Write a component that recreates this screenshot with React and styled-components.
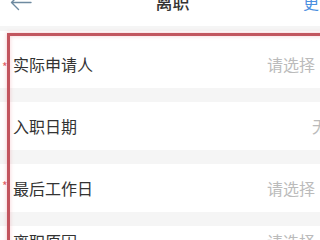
import React from "react";
import styled, { createGlobalStyle } from "styled-components";

const Global = createGlobalStyle`
  html, body { margin: 0; padding: 0; background: #f5f5f5; overflow: hidden; }
  body { font-family: "Noto Sans CJK SC", "Noto Sans", sans-serif; }
`;

const Page = styled.div`
  width: 345px;
  position: relative;
  background: #f5f5f5;
`;

const Header = styled.div`
  box-sizing: content-box;
  height: 20px;
  margin-top: -8px;
  padding: 0 10px 14px 10px;
  background: #fff;
  display: flex;
  align-items: center;
  justify-content: space-between;
  position: relative;
`;

const Back = styled.div`
  width: 22px;
  height: 20px;
  display: flex;
  align-items: center;
`;

const Title = styled.div`
  position: absolute;
  left: 0;
  right: 0;
  top: 0;
  height: 20px;
  line-height: 20px;
  text-align: center;
  font-size: 17px;
  font-weight: 500;
  color: #333;
  pointer-events: none;
`;

const More = styled.div`
  font-size: 16px;
  line-height: 20px;
  color: #4a8fe0;
`;

const Gap = styled.div`
  height: 5px;
`;

const Form = styled.div`
  position: relative;
  display: flex;
  flex-direction: column;
  gap: 14px;
`;

const Row = styled.div`
  position: relative;
  background: #fff;
  box-sizing: border-box;
  height: ${(p) => p.$h}px;
  padding: ${(p) => p.$pt}px 30px 0 13px;
  display: flex;
  align-items: ${(p) => (p.$top ? "flex-start" : "center")};
  justify-content: space-between;
`;

const Star = styled.span`
  position: absolute;
  left: 2px;
  font-size: 12px;
  color: #e05a62;
  line-height: 1;
`;

const Label = styled.span`
  font-size: 16px;
  line-height: 22px;
  color: #333;
`;

const Value = styled.span`
  font-size: 16px;
  line-height: 22px;
  color: #bbb;
  margin-right: ${(p) => p.$mr || 0}px;
`;

const Highlight = styled.div`
  position: absolute;
  top: 2px;
  left: 7px;
  width: 400px;
  height: 400px;
  border: 3px solid #c2555e;
  box-shadow: 0 0 4px rgba(230, 120, 130, 0.45),
    inset 0 0 4px rgba(230, 120, 130, 0.35);
  pointer-events: none;
`;

const rows = [
  { label: "实际申请人", value: "请选择", star: true, h: 57, pt: 9 },
  { label: "入职日期", value: "无", h: 48, pt: 0, mr: -13 },
  { label: "最后工作日", value: "请选择", star: true, h: 48, pt: 0 },
  { label: "离职原因", value: "请选择", h: 60, pt: 4, top: true },
];

export default function App() {
  return (
    <>
      <Global />
      <Page>
        <Header>
          <Back>
            <svg width="22" height="20" viewBox="0 0 22 20">
              <path
                d="M21 10.5H1.5M1.5 10.5L8.5 3.5M1.5 10.5L8.5 17.5"
                fill="none"
                stroke="#6e8aa0"
                strokeWidth="1.4"
                strokeLinecap="round"
              />
            </svg>
          </Back>
          <Title>离职</Title>
          <More>更多</More>
        </Header>
        <Gap />
        <Form>
          {rows.map((r) => (
            <Row key={r.label} $h={r.h} $pt={r.pt} $top={r.top}>
              {r.star && <Star style={{ top: r.pt + r.h / 2 - 8 }}>*</Star>}
              <Label>{r.label}</Label>
              <Value $mr={r.mr}>{r.value}</Value>
            </Row>
          ))}
          <Highlight />
        </Form>
      </Page>
    </>
  );
}
